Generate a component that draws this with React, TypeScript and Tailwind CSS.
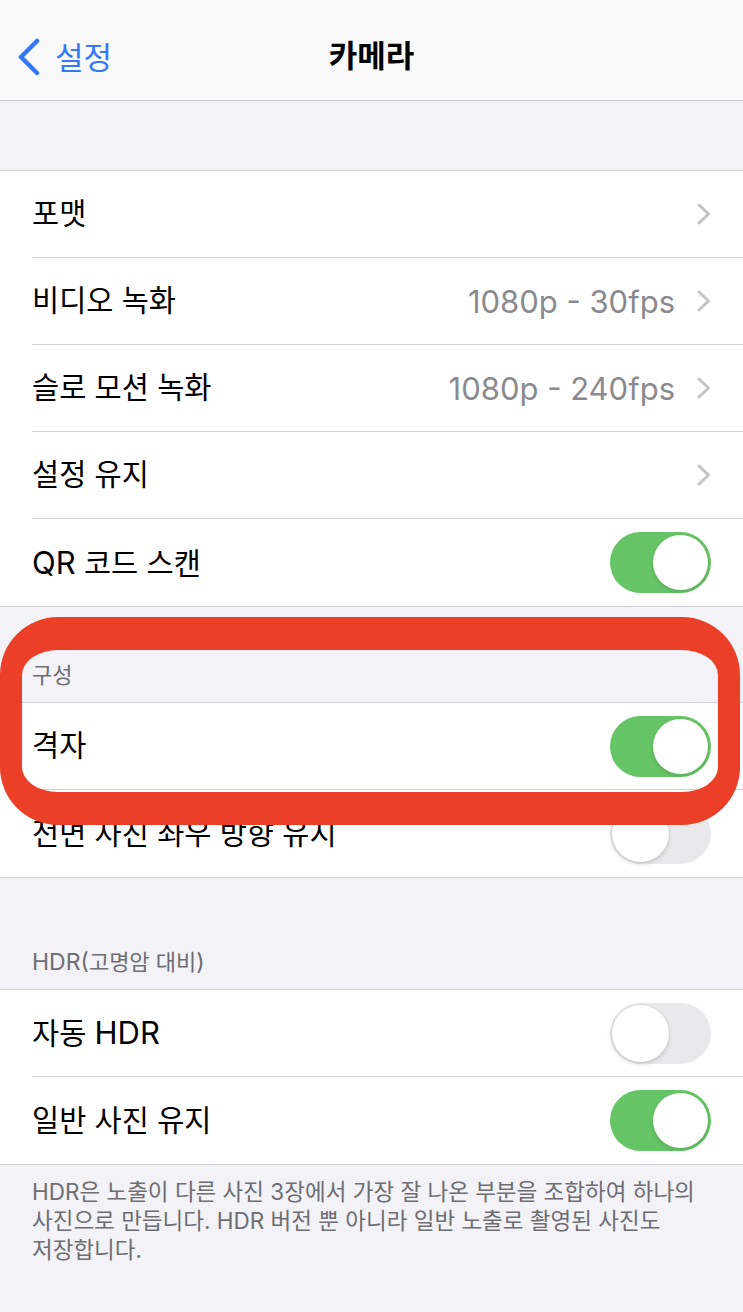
import React from 'react';

const FONT = "font-['Inter','Noto_Sans_CJK_KR',sans-serif]";

function Chevron() {
  return (
    <svg width="14" height="22" viewBox="0 0 14 22" className="shrink-0">
      <polyline points="2,2 11.5,11 2,20" fill="none" stroke="#c4c4c7" strokeWidth="3" strokeLinecap="round" strokeLinejoin="round" />
    </svg>
  );
}

function Toggle({ on }: { on: boolean }) {
  return on ? (
    <div className="w-[101px] h-[61px] rounded-full bg-[#65c466] flex items-center justify-end pr-[3px] shrink-0">
      <div className="w-[55px] h-[55px] rounded-full bg-white shadow-[0_2px_4px_rgba(0,0,0,0.12)]" />
    </div>
  ) : (
    <div className="w-[101px] h-[61px] rounded-full bg-[#e9e9eb] flex items-center pl-[2px] shrink-0">
      <div className="w-[57px] h-[57px] rounded-full bg-white shadow-[0_2px_5px_rgba(0,0,0,0.15),0_0_0_1px_rgba(0,0,0,0.04)]" />
    </div>
  );
}

interface RowProps {
  label: React.ReactNode;
  value?: string;
  chevron?: boolean;
  toggle?: boolean;
  last?: boolean;
}

function Row({ label, value, chevron, toggle, last }: RowProps) {
  return (
    <div className="h-[87px] pl-8 flex bg-white">
      <div className={`flex-1 flex items-center justify-between pr-[32px] ${last ? '' : 'border-b border-[#d1d1d6]'}`}>
        <span className="text-[29.5px] leading-none text-black">{label}</span>
        <div className="flex items-center gap-[22px]">
          {value && <span className="text-[31px] leading-none text-[#8a8a8e]">{value}</span>}
          {chevron && <Chevron />}
          {toggle !== undefined && <Toggle on={toggle} />}
        </div>
      </div>
    </div>
  );
}

function Header({ children, h }: { children: React.ReactNode; h: string }) {
  return (
    <div className={`${h} px-8 pb-[12px] flex items-end`}>
      <span className="text-[22px] leading-[29px] text-[#6d6d72]">{children}</span>
    </div>
  );
}

const Lat = ({ children }: { children: React.ReactNode }) => <span className="text-[31px]">{children}</span>;
const LatS = ({ children }: { children: React.ReactNode }) => <span className="text-[23px]">{children}</span>;

export default function App() {
  return (
    <div className={`relative w-full min-h-[1312px] bg-[#f2f2f7] ${FONT}`}>
      <div className="h-[101px] bg-[#f9f9f9] border-b border-[#c8c8cc] relative flex items-center justify-center pt-[10px]">
        <div className="absolute left-[17px] top-[38px] flex items-center gap-[14px]">
          <svg width="24" height="38" viewBox="0 0 24 38">
            <polyline points="20,3 4,19 20,35" fill="none" stroke="#3478f6" strokeWidth="4.5" strokeLinecap="round" strokeLinejoin="round" />
          </svg>
          <span className="text-[31px] leading-none text-[#3478f6]">설정</span>
        </div>
        <span className="text-[31px] leading-none font-bold text-black">카메라</span>
      </div>

      <div className="h-[69px]" />

      <div className="border-y border-[#d1d1d6]">
        <Row label="포맷" chevron />
        <Row label="비디오 녹화" value="1080p - 30fps" chevron />
        <Row label="슬로 모션 녹화" value="1080p - 240fps" chevron />
        <Row label="설정 유지" chevron />
        <Row label={<><Lat>QR</Lat> 코드 스캔</>} toggle last />
      </div>

      <Header h="h-[95px]">구성</Header>
      <div className="border-y border-[#d1d1d6]">
        <Row label="격자" toggle />
        <Row label="전면 사진 좌우 방향 유지" toggle={false} last />
      </div>

      <Header h="h-[111px]"><LatS>HDR(</LatS>고명암 대비<LatS>)</LatS></Header>
      <div className="border-y border-[#d1d1d6]">
        <Row label={<>자동 <Lat>HDR</Lat></>} toggle={false} />
        <Row label="일반 사진 유지" toggle last />
      </div>

      <div className="px-8 pt-[12px] text-[22.5px] leading-[29px] text-[#6d6d72]">
        HDR은 노출이 다른 사진 3장에서 가장 잘 나온 부분을 조합하여 하나의
        <br />
        사진으로 만듭니다. HDR 버전 뿐 아니라 일반 노출로 촬영된 사진도
        <br />
        저장합니다.
      </div>

      <div className="absolute left-0 top-[617px] w-[740px] h-[208px] border-x-[22px] border-y-[33px] border-[#eb4027] rounded-[58px] pointer-events-none" />
    </div>
  );
}
